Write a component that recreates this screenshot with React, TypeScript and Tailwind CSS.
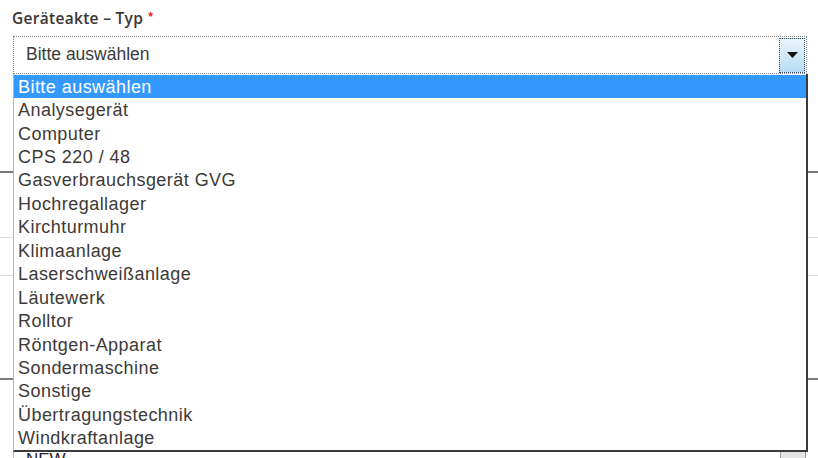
import React from "react";

const items = [
  "Bitte auswählen",
  "Analysegerät",
  "Computer",
  "CPS 220 / 48",
  "Gasverbrauchsgerät GVG",
  "Hochregallager",
  "Kirchturmuhr",
  "Klimaanlage",
  "Laserschweißanlage",
  "Läutewerk",
  "Rolltor",
  "Röntgen-Apparat",
  "Sondermaschine",
  "Sonstige",
  "Übertragungstechnik",
  "Windkraftanlage",
];

export default function App() {
  return (
    <div className="relative w-[818px] h-[458px] bg-white overflow-hidden" style={{ fontFamily: "'Liberation Sans', Arial, sans-serif" }}>
      {/* label */}
      <div className="pl-[12px] pt-[8px] h-[36px] flex items-start">
        <span className="text-[15.5px] font-semibold text-[#3a3633] leading-[21px] tracking-[0.3px]" style={{ fontFamily: "'Open Sans', 'Noto Sans', sans-serif" }}>
          Geräteakte – Typ
        </span>
        <span className="ml-[5px] mt-[2px] text-[12px] text-[#e8202a] leading-[14px] font-bold">*</span>
      </div>

      {/* select */}
      <div className="ml-[13px] w-[794px] h-[38px] border border-dotted border-[#8a8a8a] flex items-center justify-between">
        <span className="pl-[12px] text-[17.5px] text-[#3b3b3b] leading-none">Bitte auswählen</span>
        <div className="w-[26px] h-[35px] mr-[1px] border border-dotted border-[#2b4a66] bg-gradient-to-b from-[#eaf5fd] to-[#b9dbf3] flex items-center justify-center">
          <svg width="11" height="6" viewBox="0 0 11 6"><path d="M0 0h11L5.5 6z" fill="#111" /></svg>
        </div>
      </div>

      {/* underlying form content (covered by the open list) */}
      <div className="w-full">
        <div className="h-[97px]" />
        <div className="h-[66px] border-t-2 border-[#7a7a7a]" />
        <div className="h-[38px] border-t border-[#dcdcdc]" />
        <div className="h-[103px] border-t border-[#dcdcdc]" />
        <div className="h-[72px] border-t-2 border-[#7a7a7a]" />
        <div className="flex justify-between pl-[13px] pr-[12px]">
          <div className="border-l border-[#bdbdbd] pl-[12px] text-[17px] text-[#222] leading-none pt-[1px]">NEW</div>
          <div className="w-[26px] h-[10px] border border-[#9a9a9a] bg-[#e4e4e4]" />
        </div>
      </div>

      {/* open dropdown list */}
      <div className="absolute left-[13px] top-[74px] w-[795px] bg-white border-l border-l-[#b5b5b5] border-r-2 border-r-[#3c3c3c] border-b-2 border-b-[#3c3c3c] pt-[1px]">
        {items.map((it, i) => (
          <div
            key={it}
            className={
              "h-[23.44px] flex items-center pl-[4px] text-[18px] tracking-[0.45px] leading-none " +
              (i === 0 ? "bg-[#3399ff] text-white" : "text-[#3d3a38]")
            }
          >
            {it}
          </div>
        ))}
      </div>
    </div>
  );
}
